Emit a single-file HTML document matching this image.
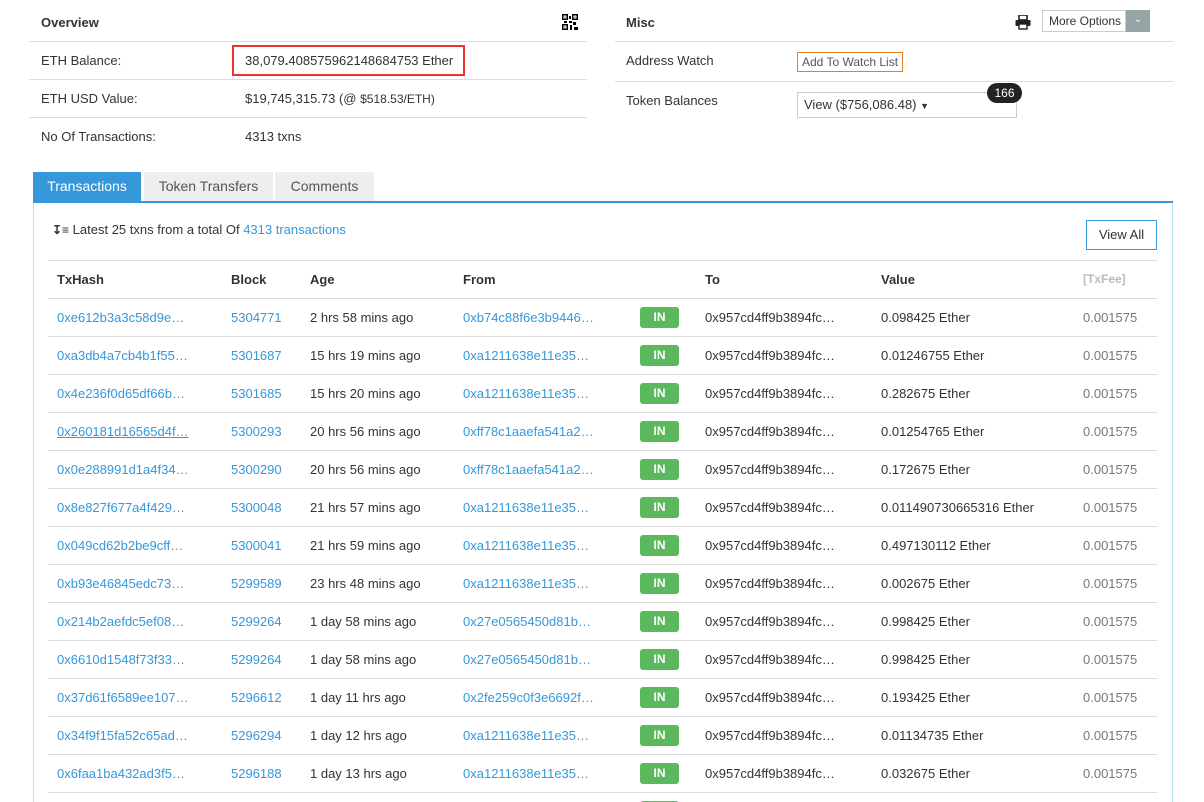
<!DOCTYPE html>
<html><head><meta charset="utf-8"><style>
*{box-sizing:border-box;margin:0;padding:0}
html,body{width:1204px;height:802px;overflow:hidden}
body{background:#fff;font-family:"Liberation Sans",Arial,sans-serif;font-size:13px;color:#333}
#w{position:relative;width:1204px;height:802px;overflow:hidden}
.a{position:absolute;white-space:nowrap}
.hr{position:absolute;height:1px;background:#ddd}
.b{font-weight:bold}
.lk{color:#3498db}
.tab{position:absolute;top:172px;height:29px;background:#eee;color:#555;font-size:14px;line-height:29px;text-align:center}
.in{position:absolute;left:640px;width:39px;height:21px;background:#5cb85c;color:#fff;font-weight:bold;font-size:12px;line-height:21px;text-align:center;border-radius:3px}
</style></head><body><div id="w">
<div class="a b" style="left:41px;top:15px">Overview</div>
<svg class="a" style="left:562px;top:14px" width="16" height="16" viewBox="0 0 16 16"><g fill="#000"><rect x="0" y="0" width="6" height="6"/><rect x="10" y="0" width="6" height="6"/><rect x="0" y="10" width="6" height="6"/><rect x="7" y="2" width="2" height="3"/><rect x="7" y="7" width="3" height="2"/><rect x="11" y="8" width="3" height="3"/><rect x="8" y="11" width="2" height="5"/><rect x="12" y="13" width="4" height="3"/><rect x="2" y="7" width="3" height="2"/></g><g fill="#fff"><rect x="1.5" y="1.5" width="3" height="3"/><rect x="11.5" y="1.5" width="3" height="3"/><rect x="1.5" y="11.5" width="3" height="3"/></g><g fill="#000"><rect x="2.5" y="2.5" width="1" height="1"/><rect x="12.5" y="2.5" width="1" height="1"/><rect x="2.5" y="12.5" width="1" height="1"/></g></svg>
<div class="hr" style="left:29px;top:41px;width:558px"></div>
<div class="a" style="left:41px;top:53px">ETH Balance:</div>
<div class="a" style="left:232px;top:45px;width:233px;height:31px;border:2px solid #e33"></div>
<div class="a" style="left:245px;top:53px">38,079<b>.</b>408575962148684753 Ether</div>
<div class="hr" style="left:29px;top:79px;width:558px"></div>
<div class="a" style="left:41px;top:91px">ETH USD Value:</div>
<div class="a" style="left:245px;top:91px">$19,745,315.73 (@ <span style="font-size:12px">$518.53/ETH)</span></div>
<div class="hr" style="left:29px;top:117px;width:558px"></div>
<div class="a" style="left:41px;top:129px">No Of Transactions:</div>
<div class="a" style="left:245px;top:129px">4313 txns</div>

<div class="a b" style="left:626px;top:15px">Misc</div>
<svg class="a" style="left:1015px;top:15px" width="16" height="15" viewBox="0 0 16 15"><rect x="4" y="0" width="8" height="5" fill="none" stroke="#222" stroke-width="1.6"/><rect x="0.5" y="5" width="15" height="6" rx="1" fill="#222"/><rect x="4" y="9" width="8" height="5" fill="#fff" stroke="#222" stroke-width="1.4"/></svg>
<div class="a" style="left:1042px;top:10px;width:84px;height:22px;border:1px solid #ccc;line-height:20px;padding-left:6px;color:#333;font-size:12px">More Options</div>
<div class="a" style="left:1126px;top:10px;width:24px;height:22px;background:#95a5a6;color:#fff;text-align:center;line-height:20px;font-size:10px">&#8964;</div>
<div class="hr" style="left:615px;top:41px;width:558px"></div>
<div class="a" style="left:626px;top:53px">Address Watch</div>
<div class="a" style="left:797px;top:52px;width:106px;height:20px;border:1px solid #e67e22;line-height:18px;padding-left:4px;font-size:12px;color:#555">Add To Watch List</div>
<div class="hr" style="left:615px;top:81px;width:558px"></div>
<div class="a" style="left:626px;top:93px">Token Balances</div>
<div class="a" style="left:797px;top:92px;width:220px;height:26px;border:1px solid #ccc;line-height:24px;padding-left:6px">View ($756,086.48) <span style="font-size:9px">&#9660;</span></div>
<div class="a" style="left:987px;top:83px;width:35px;height:20px;background:#222;color:#fff;border-radius:10px;text-align:center;line-height:20px;font-size:12px">166</div>

<div class="tab" style="left:33px;width:108px;background:#3498db;color:#fff">Transactions</div>
<div class="tab" style="left:144px;width:129px">Token Transfers</div>
<div class="tab" style="left:275px;width:99px">Comments</div>
<div class="a" style="left:33px;top:201px;width:1140px;height:2px;background:#3498db"></div>
<div class="a" style="left:33px;top:203px;width:1140px;height:620px;border:1px solid #bde3f0;border-top:none"></div>

<div class="a" style="left:52px;top:222px"><span style="font-weight:bold;font-size:12px">&#8615;&#8801;</span> Latest 25 txns from a total Of <span class="lk">4313 transactions</span></div>
<div class="a" style="left:1086px;top:220px;width:71px;height:30px;border:1px solid #3498db;line-height:28px;text-align:center">View All</div>
<div class="hr" style="left:48px;top:260px;width:1109px"></div>
<div class="a b" style="left:57px;top:272px">TxHash</div>
<div class="a b" style="left:231px;top:272px">Block</div>
<div class="a b" style="left:310px;top:272px">Age</div>
<div class="a b" style="left:463px;top:272px">From</div>
<div class="a b" style="left:705px;top:272px">To</div>
<div class="a b" style="left:881px;top:272px">Value</div>
<div class="a b" style="left:1083px;top:272px;color:#bbb;font-size:12px">[TxFee]</div>
<div id="rows"></div>
<script>
var d=[["0xe612b3a3c58d9e…","5304771","2 hrs 58 mins ago","0xb74c88f6e3b9446…","0.098425 Ether"],
["0xa3db4a7cb4b1f55…","5301687","15 hrs 19 mins ago","0xa1211638e11e35…","0.01246755 Ether"],
["0x4e236f0d65df66b…","5301685","15 hrs 20 mins ago","0xa1211638e11e35…","0.282675 Ether"],
["0x260181d16565d4f…","5300293","20 hrs 56 mins ago","0xff78c1aaefa541a2…","0.01254765 Ether"],
["0x0e288991d1a4f34…","5300290","20 hrs 56 mins ago","0xff78c1aaefa541a2…","0.172675 Ether"],
["0x8e827f677a4f429…","5300048","21 hrs 57 mins ago","0xa1211638e11e35…","0.011490730665316 Ether"],
["0x049cd62b2be9cff…","5300041","21 hrs 59 mins ago","0xa1211638e11e35…","0.497130112 Ether"],
["0xb93e46845edc73…","5299589","23 hrs 48 mins ago","0xa1211638e11e35…","0.002675 Ether"],
["0x214b2aefdc5ef08…","5299264","1 day 58 mins ago","0x27e0565450d81b…","0.998425 Ether"],
["0x6610d1548f73f33…","5299264","1 day 58 mins ago","0x27e0565450d81b…","0.998425 Ether"],
["0x37d61f6589ee107…","5296612","1 day 11 hrs ago","0x2fe259c0f3e6692f…","0.193425 Ether"],
["0x34f9f15fa52c65ad…","5296294","1 day 12 hrs ago","0xa1211638e11e35…","0.01134735 Ether"],
["0x6faa1ba432ad3f5…","5296188","1 day 13 hrs ago","0xa1211638e11e35…","0.032675 Ether"]];
var h="";
for(var i=0;i<d.length;i++){var y=298+i*38,r=d[i];
h+='<div class="hr" style="left:48px;top:'+y+'px;width:1109px"></div>';
var t=y+12;
h+='<div class="a lk" style="left:57px;top:'+t+'px'+(i==3?';text-decoration:underline':'')+'">'+r[0]+'</div>';
h+='<div class="a lk" style="left:231px;top:'+t+'px">'+r[1]+'</div>';
h+='<div class="a" style="left:310px;top:'+t+'px">'+r[2]+'</div>';
h+='<div class="a lk" style="left:463px;top:'+t+'px">'+r[3]+'</div>';
h+='<div class="in" style="top:'+(y+9)+'px">IN</div>';
h+='<div class="a" style="left:705px;top:'+t+'px">0x957cd4ff9b3894fc…</div>';
h+='<div class="a" style="left:881px;top:'+t+'px">'+r[4]+'</div>';
h+='<div class="a" style="left:1083px;top:'+t+'px;color:#777">0.001575</div>';}
h+='<div class="hr" style="left:48px;top:792px;width:1109px"></div><div class="in" style="top:801px">IN</div>';
document.getElementById("rows").innerHTML=h;
</script>
</div></body></html>
